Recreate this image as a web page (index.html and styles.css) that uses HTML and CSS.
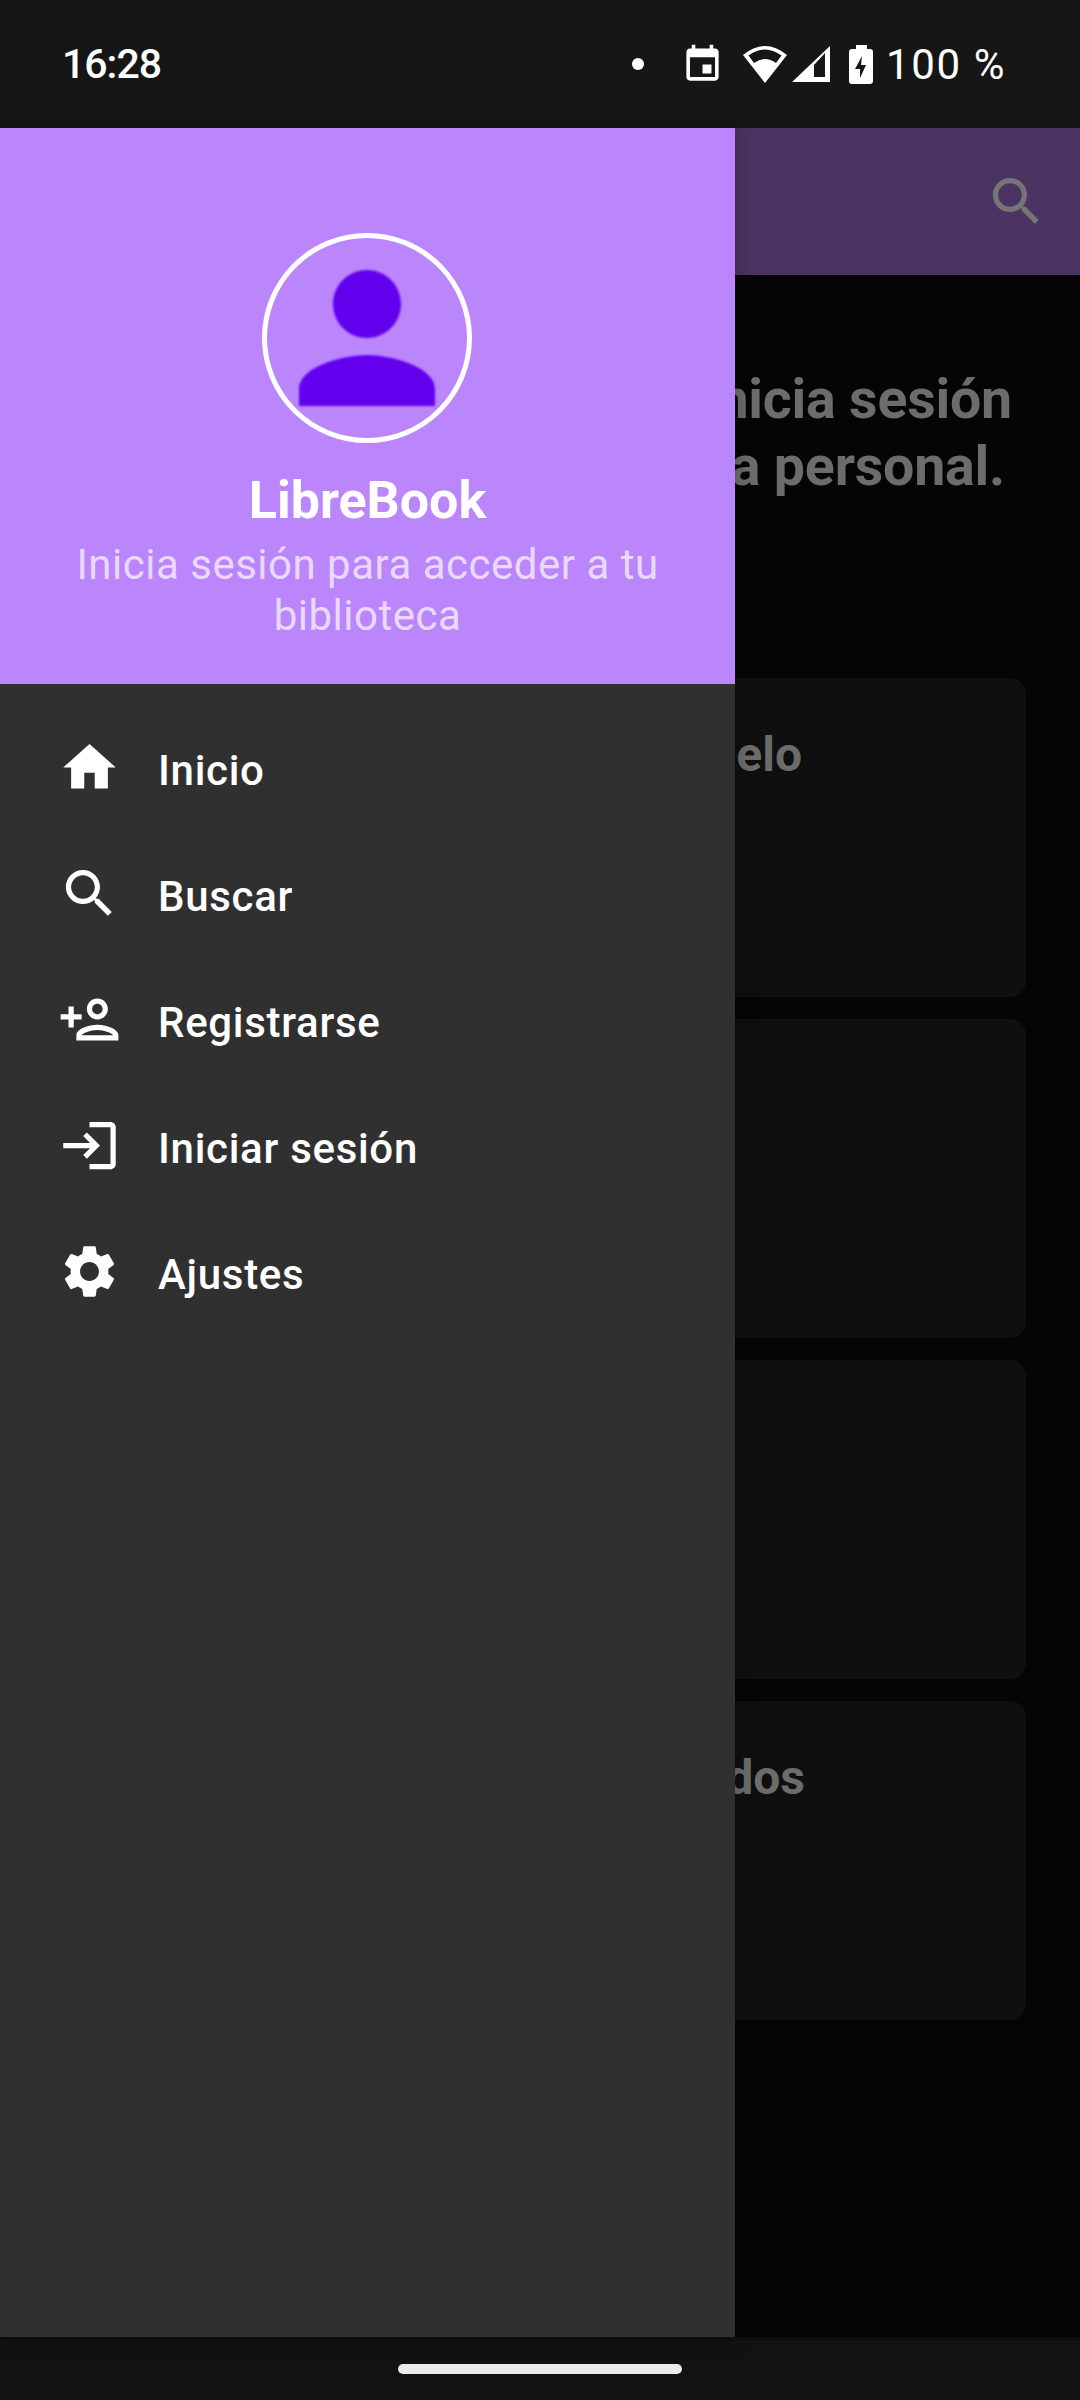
FILE: index.html
```html
<!DOCTYPE html>
<html lang="es">
<head>
  <meta charset="UTF-8">
  <title>LibreBook</title>
  <link rel="stylesheet" href="styles.css">
</head>
<body>
  <div class="phone">
    <div class="status-bar">
      <span class="clock">16:28</span>
      <div class="status-icons">
        <span class="status-dot"></span>
        <svg class="ic-calendar" viewBox="0 0 24 24"><path d="M17 12h-5v5h5v-5zM16 1v2H8V1H6v2H5c-1.11 0-1.99.9-1.99 2L3 19c0 1.1.89 2 2 2h14c1.1 0 2-.9 2-2V5c0-1.1-.9-2-2-2h-1V1h-2zm3 18H5V8h14v11z"/></svg>
        <svg class="ic-wifi" viewBox="0 0 44 37"><path fill-rule="evenodd" d="M0 9Q22-9 44 9L22 37ZM5.5 9.5 11 17Q22 9 33 17L38.5 9.5Q22-2.5 5.5 9.5Z"/></svg>
        <svg class="ic-signal" viewBox="0 0 38 36"><path fill-rule="evenodd" d="M0 36 38 0V36ZM33 7 22 19V31H33Z"/></svg>
        <svg class="ic-battery" viewBox="0 0 24 39"><path fill-rule="evenodd" d="M7 0H18V4H21Q24 4 24 7V36Q24 39 21 39H3Q0 39 0 36V7Q0 4 3 4H7ZM13 11 6 24H11V33L17 20H12Z"/></svg>
        <span class="battery-text">100 %</span>
      </div>
    </div>

    <div class="screen">
      <!-- pantalla de detras, oscurecida por el drawer -->
      <div class="app-bar">
        <svg class="app-bar-search" viewBox="0 0 24 24"><path d="M15.5 14h-.79l-.28-.27C15.41 12.59 16 11.11 16 9.5 16 5.91 13.09 3 9.5 3S3 5.91 3 9.5 5.91 16 9.5 16c1.61 0 3.09-.59 4.23-1.57l.27.28v.79l5 4.99L20.49 19l-4.99-5zm-6 0C7.01 14 5 11.99 5 9.5S7.01 5 9.5 5 14 7.01 14 9.5 11.99 14 9.5 14z"/></svg>
      </div>
      <div class="content">
        <h2 class="welcome">
          <span class="welcome-line">Inicia sesión</span>
          <span class="welcome-line welcome-line-second">biblioteca personal.</span>
        </h2>
        <div class="cards">
          <div class="card"><h3 class="card-title">Modelo</h3></div>
          <div class="card"></div>
          <div class="card"></div>
          <div class="card"><h3 class="card-title card-title-last">Guardados</h3></div>
        </div>
      </div>

      <aside class="drawer">
        <header class="drawer-header">
          <div class="avatar">
            <svg class="avatar-icon" viewBox="0 0 24 24"><path d="M12 12c2.21 0 4-1.79 4-4s-1.79-4-4-4-4 1.79-4 4 1.79 4 4 4zm0 2c-2.67 0-8 1.34-8 4v2h16v-2c0-2.66-5.33-4-8-4z"/></svg>
          </div>
          <div class="drawer-title">LibreBook</div>
          <div class="drawer-subtitle">Inicia sesión para acceder a tu biblioteca</div>
        </header>
        <nav class="menu">
          <a class="menu-item">
            <svg class="menu-icon" viewBox="0 0 24 24"><path d="M10 20v-6h4v6h5v-8h3L12 3 2 12h3v8z"/></svg>
            <span class="menu-label">Inicio</span>
          </a>
          <a class="menu-item">
            <svg class="menu-icon" viewBox="0 0 24 24"><path d="M15.5 14h-.79l-.28-.27C15.41 12.59 16 11.11 16 9.5 16 5.91 13.09 3 9.5 3S3 5.91 3 9.5 5.91 16 9.5 16c1.61 0 3.09-.59 4.23-1.57l.27.28v.79l5 4.99L20.49 19l-4.99-5zm-6 0C7.01 14 5 11.99 5 9.5S7.01 5 9.5 5 14 7.01 14 9.5 11.99 14 9.5 14z"/></svg>
            <span class="menu-label">Buscar</span>
          </a>
          <a class="menu-item">
            <svg class="menu-icon" viewBox="0 0 24 24"><path d="M15 12c2.21 0 4-1.79 4-4s-1.79-4-4-4-4 1.79-4 4 1.79 4 4 4zm0-6c1.1 0 2 .9 2 2s-.9 2-2 2-2-.9-2-2 .9-2 2-2zm0 8c-2.67 0-8 1.34-8 4v2h16v-2c0-2.66-5.33-4-8-4zm-6 4c.22-.72 3.31-2 6-2 2.7 0 5.8 1.29 6 2H9zm-3-3v-3h3v-2H6V7H4v3H1v2h3v3z"/></svg>
            <span class="menu-label">Registrarse</span>
          </a>
          <a class="menu-item">
            <svg class="menu-icon" viewBox="0 0 24 24"><path d="M11 7L9.6 8.4l2.6 2.6H2v2h10.2l-2.6 2.6L11 17l5-5-5-5zm9 12h-8v2h8c1.1 0 2-.9 2-2V5c0-1.1-.9-2-2-2h-8v2h8v14z"/></svg>
            <span class="menu-label">Iniciar sesión</span>
          </a>
          <a class="menu-item">
            <svg class="menu-icon" viewBox="0 0 24 24"><path d="M19.14 12.94c.04-.3.06-.61.06-.94 0-.32-.02-.64-.07-.94l2.03-1.58c.18-.14.23-.41.12-.61l-1.92-3.32c-.12-.22-.37-.29-.59-.22l-2.39.96c-.5-.38-1.03-.7-1.62-.94l-.36-2.54c-.04-.24-.24-.41-.48-.41h-3.84c-.24 0-.43.17-.47.41l-.36 2.54c-.59.24-1.13.57-1.62.94l-2.39-.96c-.22-.08-.47 0-.59.22L2.74 8.87c-.12.21-.08.47.12.61l2.03 1.58c-.05.3-.09.63-.09.94s.02.64.07.94l-2.03 1.58c-.18.14-.23.41-.12.61l1.92 3.32c.12.22.37.29.59.22l2.39-.96c.5.38 1.03.7 1.62.94l.36 2.54c.05.24.24.41.48.41h3.84c.24 0 .44-.17.47-.41l.36-2.54c.59-.24 1.13-.56 1.62-.94l2.39.96c.22.08.47 0 .59-.22l1.92-3.32c.12-.22.07-.47-.12-.61l-2.01-1.58zM12 15.6c-1.98 0-3.6-1.62-3.6-3.6s1.62-3.6 3.6-3.6 3.6 1.62 3.6 3.6-1.62 3.6-3.6 3.6z"/></svg>
            <span class="menu-label">Ajustes</span>
          </a>
        </nav>
      </aside>
    </div>

    <div class="nav-bar"><span class="nav-pill"></span></div>
  </div>
</body>
</html>
```

FILE: styles.css
```css
* { box-sizing: border-box; }
body { margin: 0; background: #050505; font-family: Roboto, "Noto Sans", sans-serif; }
h2, h3 { margin: 0; }
.phone { width: 1080px; height: 2400px; display: flex; flex-direction: column; overflow: hidden; }

/* status bar */
.status-bar { height: 128px; flex: none; background: #161616; color: #fff; display: flex; align-items: center; justify-content: space-between; padding: 0 74px 0 62px; font-size: 42px; }
.clock { font-size: 41px; font-weight: 500; letter-spacing: -1px; }
.status-icons { display: flex; align-items: center; }
.status-icons svg { fill: #fff; flex: none; display: block; }
.status-dot { width: 12px; height: 12px; border-radius: 50%; background: #fff; }
.ic-calendar { width: 43px; height: 43px; margin-left: 37px; }
.ic-wifi { width: 44px; height: 37px; margin-left: 19px; }
.ic-signal { width: 38px; height: 36px; margin-left: 5px; }
.ic-battery { width: 24px; height: 39px; margin-left: 19px; }
.battery-text { margin-left: 13px; letter-spacing: 1.6px; }

/* behind the drawer */
.screen { flex: 1; position: relative; background: #050505; }
.app-bar { height: 147px; background: #4b3461; display: flex; align-items: center; justify-content: flex-end; padding-right: 32px; }
.app-bar-search { width: 63px; height: 63px; fill: #757575; }
.content { padding: 91px 54px 0 0; }
.welcome { font-size: 55.5px; line-height: 67px; font-weight: 700; color: #6c6c6c; text-align: right; padding-right: 14px; letter-spacing: -.2px; }
.welcome-line { display: block; white-space: nowrap; }
.welcome-line-second { padding-right: 7px; }
.cards { margin-top: 178px; display: flex; flex-direction: column; gap: 22px; }
.card { height: 319px; background: #0f0f0f; border-radius: 16px; margin-left: 32px; padding: 48px 224px 0 0; text-align: right; }
.card-title { font-size: 48px; font-weight: 700; color: #6c6c6c; }
.card-title-last { margin-right: -3px; }

/* drawer */
.drawer { position: absolute; top: 0; bottom: 0; left: 0; width: 735px; background: #303030; box-shadow: 0 0 20px rgba(0, 0, 0, .25); }
.drawer-header { height: 556px; background: #bb86fc; display: flex; flex-direction: column; align-items: center; padding: 105px 48px 0; color: #fff; text-align: center; }
.avatar { width: 210px; height: 210px; flex: none; margin-left: -2px; border: 5px solid #fff; border-radius: 50%; display: flex; justify-content: center; }
.avatar-icon { width: 204px; height: 204px; flex: none; margin-top: -2px; fill: #6200ee; filter: blur(.8px); }
.drawer-title { font-size: 52px; font-weight: 700; margin-top: 27px; line-height: 61px; }
.drawer-subtitle { font-size: 42px; line-height: 51px; letter-spacing: .5px; color: rgba(255, 255, 255, .7); margin-top: 8px; }
.menu { padding-top: 20px; }
.menu-item { height: 126px; display: flex; align-items: center; padding-left: 58px; color: #fff; font-size: 42px; font-weight: 500; }
.menu-icon { width: 63px; height: 63px; fill: #fff; flex: none; margin-right: 37px; }
.menu-label { padding-top: 6px; letter-spacing: .7px; }

/* nav bar */
.nav-bar { height: 63px; flex: none; background: #121212; border-top: 3px solid #0e0e0e; display: flex; justify-content: center; padding-top: 24px; }
.nav-pill { width: 284px; height: 10px; border-radius: 5px; background: #ececec; }
```
